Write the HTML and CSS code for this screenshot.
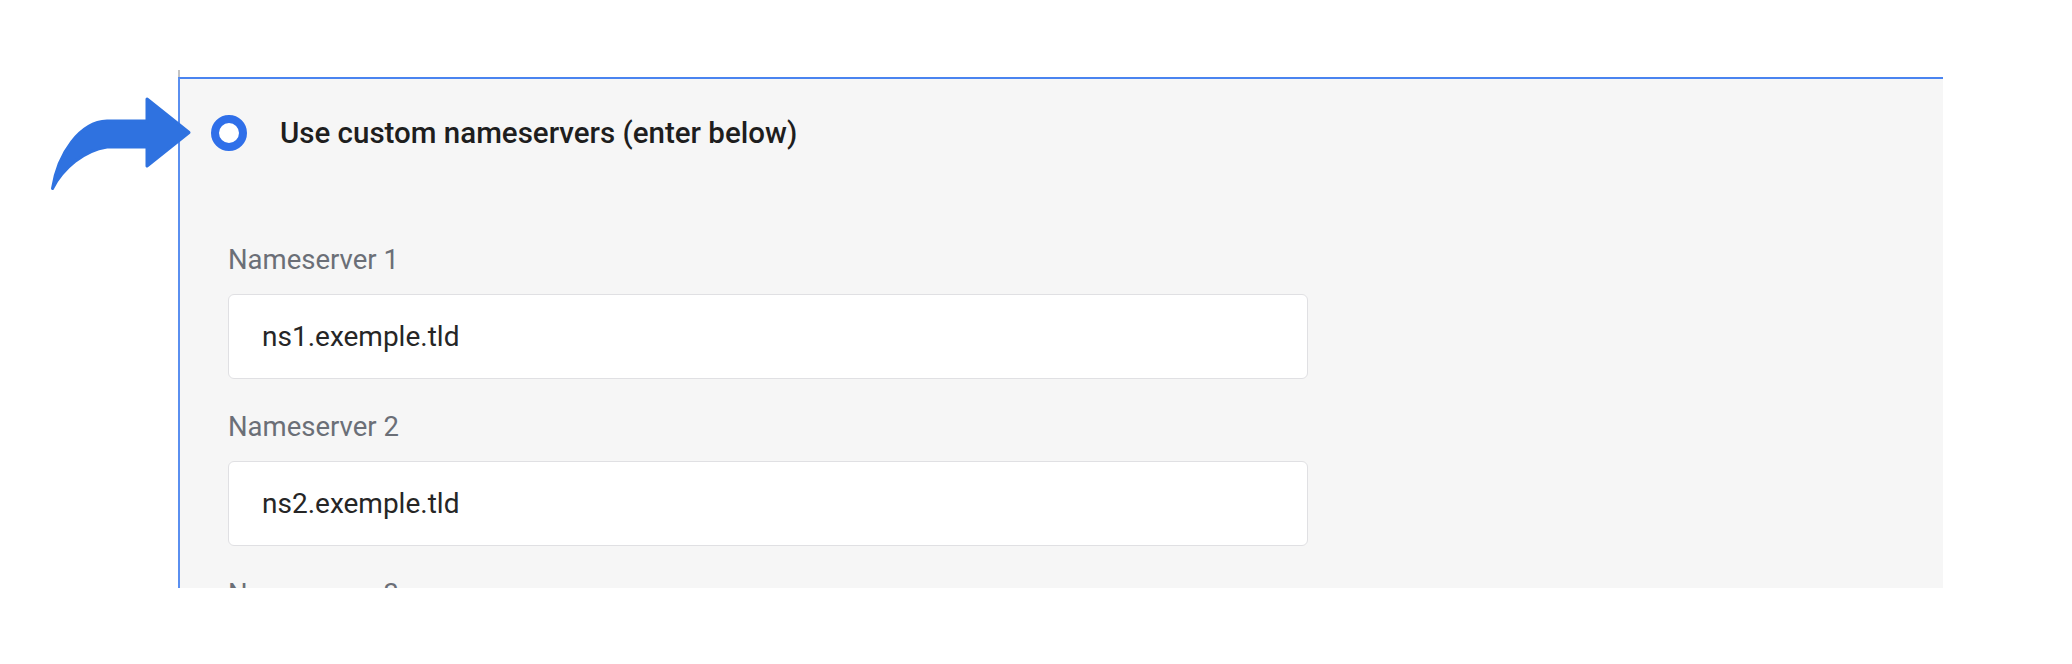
FILE: index.html
```html
<!DOCTYPE html>
<html lang="en">
<head>
    <meta charset="UTF-8">
    <title>Custom nameservers</title>
    <link rel="stylesheet" href="styles.css">
</head>
<body>
<div class="page">
    <div class="stub"></div>

    <!-- annotation arrow pointing at the selected option -->
    <svg class="pointer" viewBox="40 90 160 110" width="160" height="110">
        <path d="M147 121 L147 99 L189 132.5 L147 166 L147 147 L107 147 C84 150.5 63 168 52.5 188.5 C58 153 80 122 107 121 Z"
              fill="#2f72e0" stroke="#2f72e0" stroke-width="3" stroke-linejoin="round"/>
    </svg>

    <div class="panel">
        <label class="option">
            <span class="radio"></span>
            <span class="option-text">Use custom nameservers (enter below)</span>
        </label>

        <div class="fields">
            <div class="field">
                <label class="field-label">Nameserver 1</label>
                <input type="text" value="ns1.exemple.tld">
            </div>
            <div class="field">
                <label class="field-label">Nameserver 2</label>
                <input type="text" value="ns2.exemple.tld">
            </div>
            <div class="field">
                <label class="field-label">Nameserver 3</label>
                <input type="text" value="ns3.exemple.tld">
            </div>
        </div>
    </div>
</div>
</body>
</html>
```

FILE: styles.css
```css
body {
    font-family: Roboto, "Liberation Sans", Arial, sans-serif;
    margin: 0;
    padding: 0;
    background-color: #fff;
}
.page {
    position: relative;
    padding-top: 70px;
}
.stub {
    margin-left: 178px;
    width: 0;
    height: 7px;
    border-left: 2px solid #c4c4c4;
}
.pointer {
    position: absolute;
    left: 40px;
    top: 90px;
}
.panel {
    margin-left: 178px;
    width: 1765px;
    height: 511px;
    box-sizing: border-box;
    overflow: hidden;
    background-color: #f6f6f6;
    border-top: 2px solid #4a84f0;
    border-left: 2px solid #5a8ff0;
    padding: 36px 0 0 31px;
}
.option {
    display: flex;
    align-items: center;
    gap: 33px;
    height: 36px;
}
.radio {
    width: 36px;
    height: 36px;
    box-sizing: border-box;
    border-radius: 50%;
    border: 8px solid #2f6fe9;
    background-color: #fff;
}
.option-text {
    font-size: 29.5px;
    font-weight: 500;
    color: #1e1e1e;
}
.fields {
    margin-top: 93px;
    padding-left: 17px;
}
.field {
    margin-bottom: 32px;
}
.field-label {
    display: block;
    font-size: 27.5px;
    line-height: 32px;
    color: #6b6f77;
    margin-bottom: 18px;
}
.field input {
    display: block;
    width: 1080px;
    height: 85px;
    box-sizing: border-box;
    padding: 0 33px;
    border: 1.5px solid #e0e0e3;
    border-radius: 6px;
    background-color: #fff;
    font-family: inherit;
    font-size: 28px;
    color: #262626;
}
```
